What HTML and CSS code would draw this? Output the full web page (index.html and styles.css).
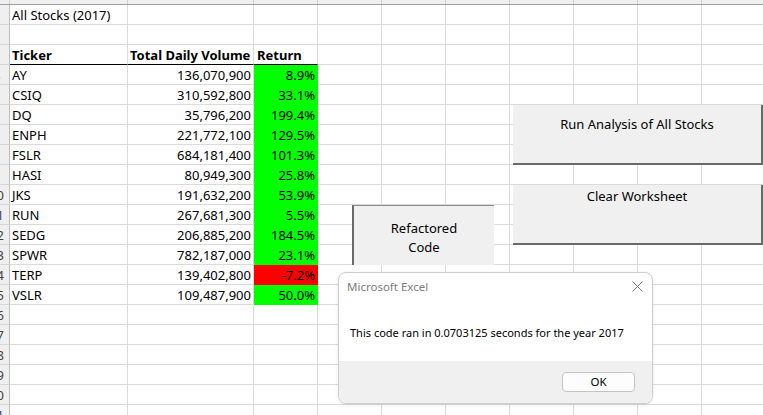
FILE: index.html
```html
<!DOCTYPE html>
<html>
<head>
<meta charset="utf-8">
<link rel="stylesheet" href="styles.css">
</head>
<body>
<div class="sheet">
  <div class="band"><div class="rh"></div><div class="c a"></div><div class="c b"></div><div class="c r"></div><div class="fill"></div></div>
  <div class="row"><div class="rh"><span>1</span></div><div class="c a">All Stocks (2017)</div><div class="c b"></div><div class="c r"></div><div class="fill"></div></div>
  <div class="row"><div class="rh"><span>2</span></div><div class="c a"></div><div class="c b"></div><div class="c r"></div><div class="fill"></div></div>
  <div class="row hd"><div class="rh"><span>3</span></div><div class="c a">Ticker</div><div class="c b">Total Daily Volume</div><div class="c r">Return</div><div class="fill"></div></div>
  <div class="row"><div class="rh"><span>4</span></div><div class="c a">AY</div><div class="c b num">136,070,900</div><div class="c r num up">8.9%</div><div class="fill"></div></div>
  <div class="row"><div class="rh"><span>5</span></div><div class="c a">CSIQ</div><div class="c b num">310,592,800</div><div class="c r num up">33.1%</div><div class="fill"></div></div>
  <div class="row"><div class="rh"><span>6</span></div><div class="c a">DQ</div><div class="c b num">35,796,200</div><div class="c r num up">199.4%</div><div class="fill"></div></div>
  <div class="row"><div class="rh"><span>7</span></div><div class="c a">ENPH</div><div class="c b num">221,772,100</div><div class="c r num up">129.5%</div><div class="fill"></div></div>
  <div class="row"><div class="rh"><span>8</span></div><div class="c a">FSLR</div><div class="c b num">684,181,400</div><div class="c r num up">101.3%</div><div class="fill"></div></div>
  <div class="row"><div class="rh"><span>9</span></div><div class="c a">HASI</div><div class="c b num">80,949,300</div><div class="c r num up">25.8%</div><div class="fill"></div></div>
  <div class="row"><div class="rh"><span>10</span></div><div class="c a">JKS</div><div class="c b num">191,632,200</div><div class="c r num up">53.9%</div><div class="fill"></div></div>
  <div class="row"><div class="rh"><span>11</span></div><div class="c a">RUN</div><div class="c b num">267,681,300</div><div class="c r num up">5.5%</div><div class="fill"></div></div>
  <div class="row"><div class="rh"><span>12</span></div><div class="c a">SEDG</div><div class="c b num">206,885,200</div><div class="c r num up">184.5%</div><div class="fill"></div></div>
  <div class="row"><div class="rh"><span>13</span></div><div class="c a">SPWR</div><div class="c b num">782,187,000</div><div class="c r num up">23.1%</div><div class="fill"></div></div>
  <div class="row"><div class="rh"><span>14</span></div><div class="c a">TERP</div><div class="c b num">139,402,800</div><div class="c r num down">-7.2%</div><div class="fill"></div></div>
  <div class="row"><div class="rh"><span>15</span></div><div class="c a">VSLR</div><div class="c b num">109,487,900</div><div class="c r num up">50.0%</div><div class="fill"></div></div>
  <div class="row"><div class="rh"><span>16</span></div><div class="c a"></div><div class="c b"></div><div class="c r"></div><div class="fill"></div></div>
  <div class="row"><div class="rh"><span>17</span></div><div class="c a"></div><div class="c b"></div><div class="c r"></div><div class="fill"></div></div>
  <div class="row"><div class="rh"><span>18</span></div><div class="c a"></div><div class="c b"></div><div class="c r"></div><div class="fill"></div></div>
  <div class="row"><div class="rh"><span>19</span></div><div class="c a"></div><div class="c b"></div><div class="c r"></div><div class="fill"></div></div>
  <div class="row"><div class="rh"><span>20</span></div><div class="c a"></div><div class="c b"></div><div class="c r"></div><div class="fill"></div></div>
  <div class="row"><div class="rh"><span>21</span></div><div class="c a"></div><div class="c b"></div><div class="c r"></div><div class="fill"></div></div>
</div>

<div class="btn btn-run">Run Analysis of All Stocks</div>
<div class="btn btn-clear">Clear Worksheet</div>
<div class="btn btn-ref">Refactored<br>Code</div>

<div class="dialog">
  <div class="dlg-head">
    <span class="dlg-title">Microsoft Excel</span>
    <svg class="dlg-close" width="11" height="11" viewBox="0 0 11 11"><path d="M0.5 0.5 L10.5 10.5 M10.5 0.5 L0.5 10.5" stroke="#7a7a7a" stroke-width="1" fill="none"/></svg>
  </div>
  <div class="dlg-body">This code ran in 0.0703125 seconds for the year 2017</div>
  <div class="dlg-foot"><div class="ok">OK</div></div>
</div>
</body>
</html>
```

FILE: styles.css
```css
html, body {
  margin: 0;
  padding: 0;
}
body {
  width: 763px;
  height: 415px;
  overflow: hidden;
  position: relative;
  background: #ffffff;
  font-family: "Noto Sans", "Open Sans", sans-serif;
  font-size: 13px;
  color: #000;
}
.sheet {
  display: flex;
  flex-direction: column;
}
.band {
  display: flex;
  height: 5px;
  background: #efefef;
  border-bottom: 1px solid #9e9e9e;
  box-sizing: border-box;
}
.band .c, .band .rh {
  height: 4px;
  border-bottom: none;
  border-right-color: #d0d0d0;
  background: #efefef;
}
.band .fill {
  height: 4px;
  border-bottom: none;
  background: repeating-linear-gradient(to right, transparent 0 63px, #d0d0d0 63px 64px);
}
.row {
  display: flex;
  height: 20px;
}
.rh {
  flex: none;
  width: 10px;
  height: 20px;
  box-sizing: border-box;
  background: #efefef;
  border-right: 1px solid #bcbcbc;
  border-bottom: 1px solid #d6d6d6;
  overflow: hidden;
  display: flex;
  justify-content: flex-end;
  color: #444;
  line-height: 19px;
  padding-top: 1px;
}
.rh span {
  flex: none;
  width: 25px;
  text-align: center;
}
.c {
  flex: none;
  height: 20px;
  box-sizing: border-box;
  border-right: 1px solid #dadada;
  border-bottom: 1px solid #dadada;
  line-height: 19px;
  padding-top: 1px;
  white-space: nowrap;
}
.a {
  width: 118px;
  padding-left: 2px;
}
.b {
  width: 126px;
  padding-left: 2px;
  padding-right: 2px;
}
.r {
  width: 64px;
  padding-left: 3px;
  padding-right: 2px;
}
.num {
  text-align: right;
}
.hd .c {
  font-weight: bold;
  border-bottom-color: #000;
}
.up {
  background: #00ff00;
  border-right-color: #00ff00;
  border-bottom-color: #00ff00;
}
.down {
  background: #ff0000;
  border-right-color: #ff0000;
  border-bottom-color: #ff0000;
}
.fill {
  flex: 1;
  height: 20px;
  box-sizing: border-box;
  border-bottom: 1px solid #dadada;
  background: repeating-linear-gradient(to right, transparent 0 63px, #dadada 63px 64px);
}

/* form buttons overlaid on the sheet */
.btn {
  position: absolute;
  box-sizing: border-box;
  background: #f0f0f0;
  text-align: center;
  line-height: 19px;
}
.btn-run {
  left: 513px;
  top: 105px;
  width: 250px;
  height: 60px;
  border-right: 2px solid #6a6a6a;
  border-bottom: 2px solid #6a6a6a;
  padding-top: 10px;
}
.btn-clear {
  left: 513px;
  top: 185px;
  width: 250px;
  height: 60px;
  border-right: 2px solid #6a6a6a;
  border-bottom: 2px solid #6a6a6a;
  padding-top: 2px;
}
.btn-ref {
  left: 352px;
  top: 205px;
  width: 142px;
  height: 60px;
  border-left: 2px solid #6a6a6a;
  border-top: 1px solid #8a8a8a;
  padding-top: 13px;
}

/* message box */
.dialog {
  position: absolute;
  left: 338px;
  top: 272px;
  width: 315px;
  height: 132px;
  box-sizing: border-box;
  background: #ffffff;
  border: 1px solid #cdcdcd;
  border-radius: 8px;
  overflow: hidden;
  display: flex;
  flex-direction: column;
  box-shadow: 0 1px 4px rgba(0, 0, 0, 0.08);
}
.dlg-head {
  display: flex;
  align-items: center;
  justify-content: space-between;
  height: 27px;
  padding: 0 9px 0 8px;
}
.dlg-title {
  font-size: 11.5px;
  color: #7b7b7b;
}
.dlg-close {
  display: block;
}
.dlg-body {
  flex: 1;
  font-size: 11px;
  color: #000;
  padding: 25px 0 0 11px;
  box-sizing: border-box;
}
.dlg-foot {
  height: 42px;
  background: #f0f0f0;
  display: flex;
  justify-content: flex-end;
  align-items: flex-start;
  padding: 11px 17px 0 0;
  box-sizing: border-box;
}
.ok {
  width: 73px;
  height: 20px;
  box-sizing: border-box;
  background: #fdfdfd;
  border: 1px solid #c4c4c4;
  border-radius: 4px;
  text-align: center;
  font-size: 11.5px;
  line-height: 18px;
}
```
